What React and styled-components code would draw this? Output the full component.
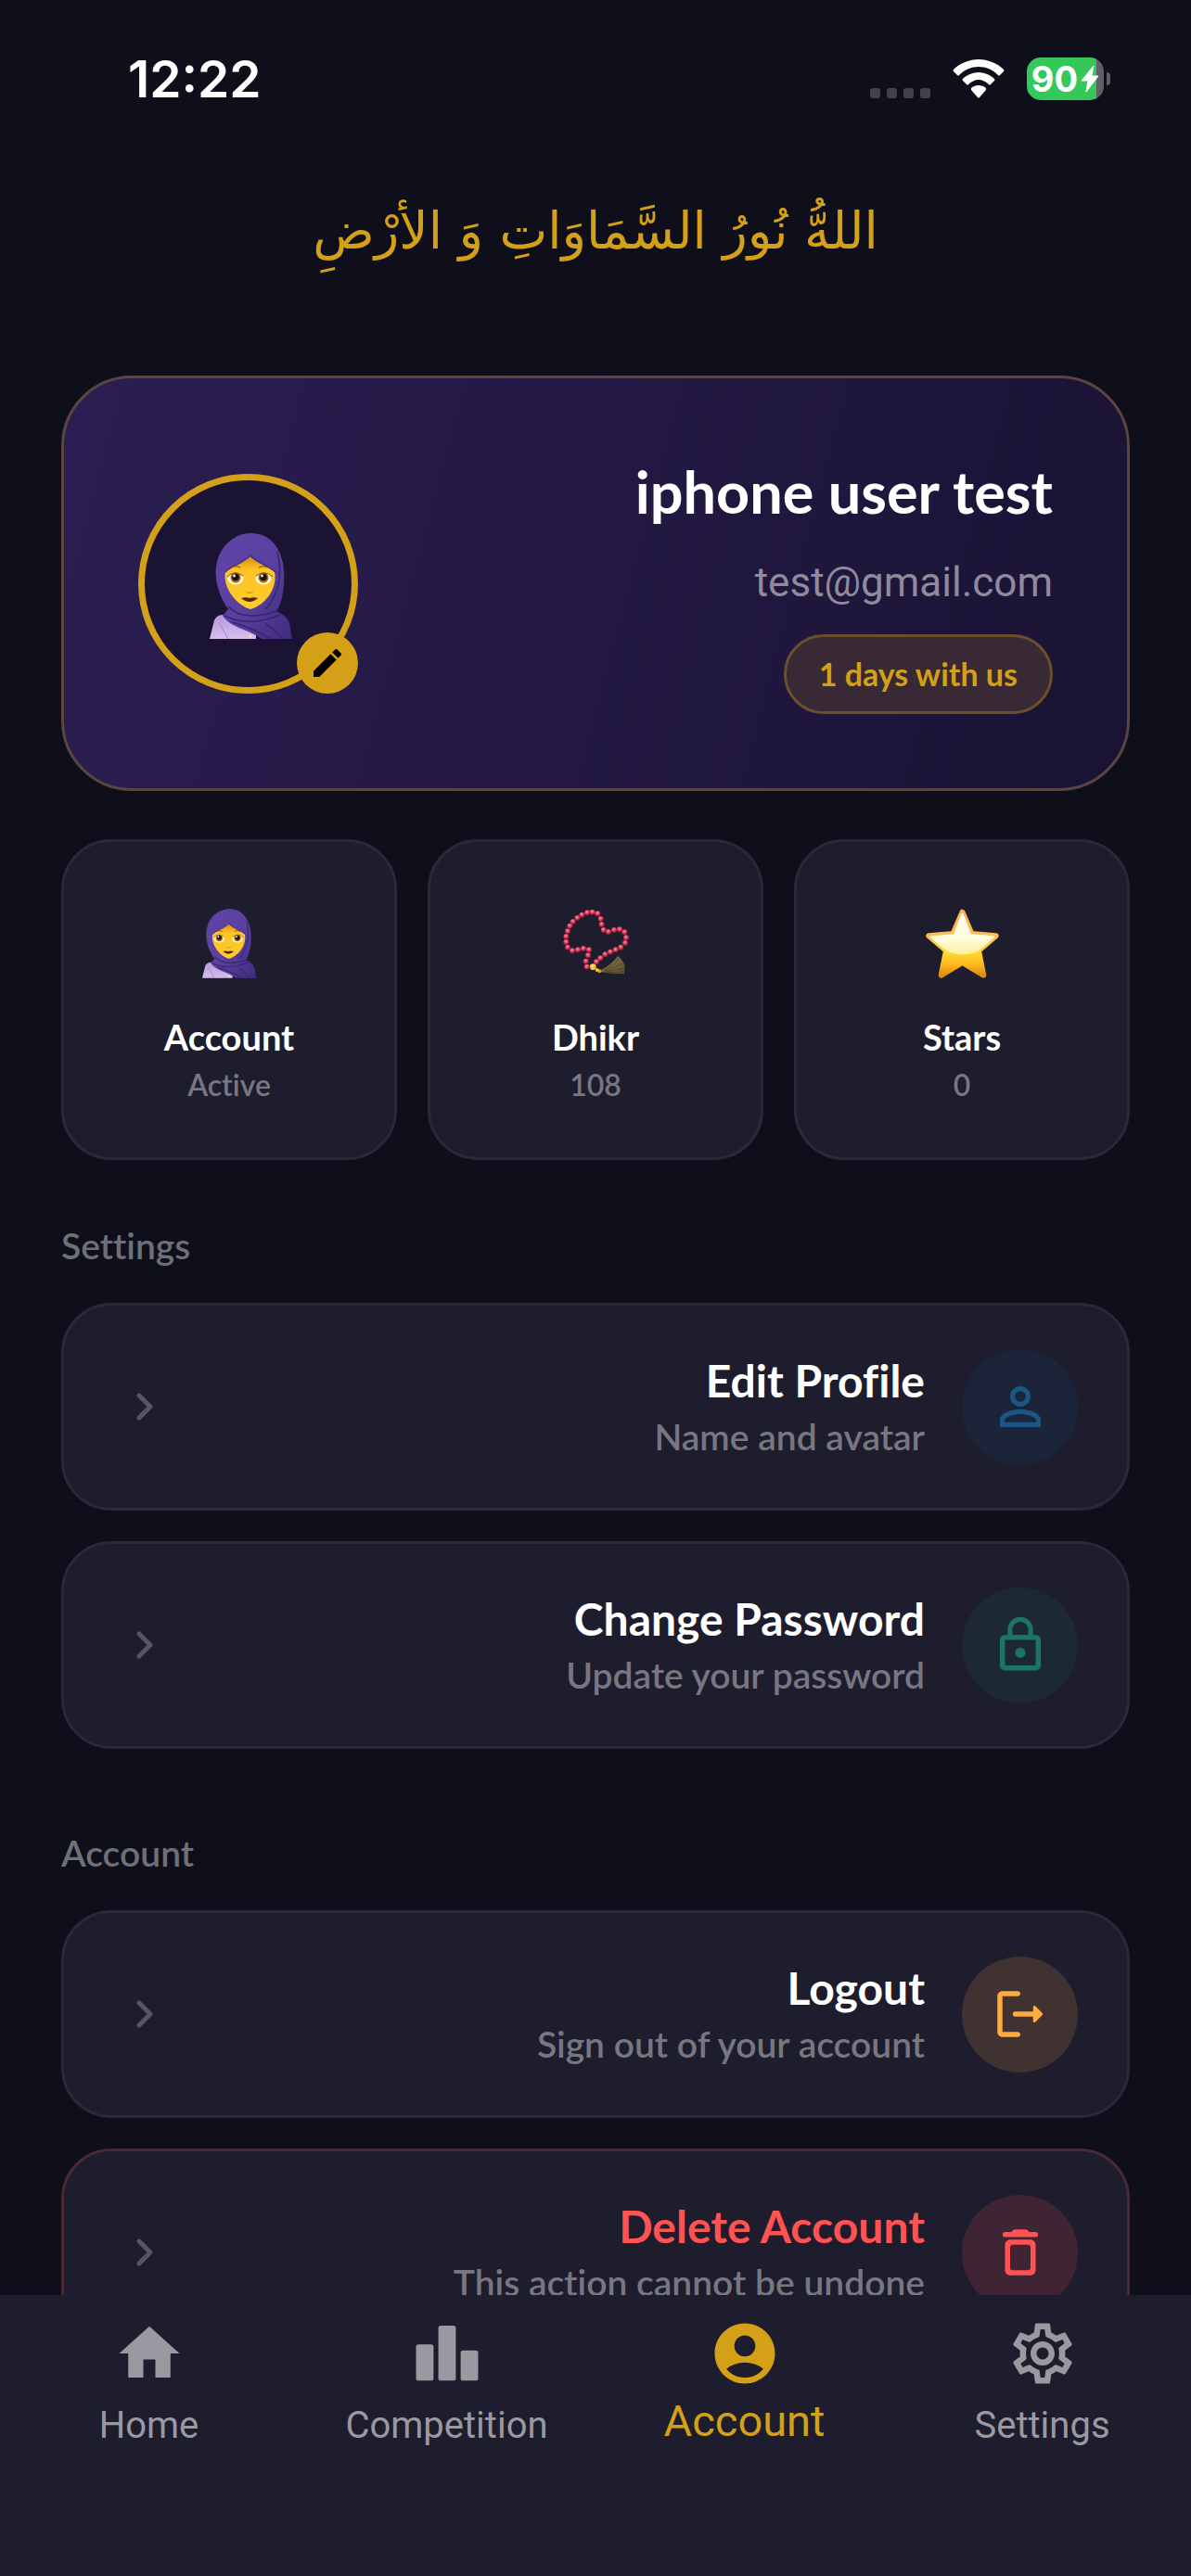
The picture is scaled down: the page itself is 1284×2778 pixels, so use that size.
import React from 'react';
import styled, { createGlobalStyle } from 'styled-components';
import {
    MdAccountCircle,
    MdEdit,
    MdHome,
    MdLockOutline,
    MdOutlineSettings,
    MdPersonOutline,
} from 'react-icons/md';

const WomanIcon = ({ width, height }) => (
    <svg width={width} height={height} viewBox="0 0 90 114" aria-hidden="true">
        <defs>
            <linearGradient id="hood" x1="0" y1="0" x2="1" y2="1">
                <stop offset="0" stopColor="#6045a8" />
                <stop offset="0.5" stopColor="#5a40a0" />
                <stop offset="1" stopColor="#3f2c7c" />
            </linearGradient>
            <linearGradient id="skin" x1="0" y1="0" x2="0" y2="1">
                <stop offset="0" stopColor="#d98a12" />
                <stop offset="0.25" stopColor="#fdc423" />
                <stop offset="1" stopColor="#ffcb2e" />
            </linearGradient>
            <linearGradient id="shirt" x1="0" y1="0" x2="0" y2="1">
                <stop offset="0" stopColor="#b79bd9" />
                <stop offset="1" stopColor="#d6bdee" />
            </linearGradient>
        </defs>
        <path d="M0 114 L5 94 Q7 89 13 88 L50 96 V114 Z" fill="url(#shirt)" />
        <path d="M10 96 L20 114" stroke="#9d83c4" strokeWidth="1" />
        <path
            d="M45 0 C64 0 75 14 79 32 C82 50 80 72 72 84 C80 88 85 92 86 97 L89 114 H56 C44 104 22 102 14 89 L20 82 C10 68 5 50 7 36 C10 14 26 0 45 0 Z"
            fill="url(#hood)"
        />
        <path
            d="M43 25 C52 33 64 36 70 42 C73 57 63 76 44 82 C27 77 14 57 17 42 C22 36 35 33 43 25 Z"
            fill="url(#skin)"
        />
        <path d="M17 42 C22 35 36 33 44 24 C52 33 64 35 71 42" stroke="#4a3489" strokeWidth="1.5" fill="none" />
        <ellipse cx="28" cy="49" rx="8.5" ry="6.5" fill="#fff8e4" />
        <ellipse cx="58" cy="49" rx="8.5" ry="6.5" fill="#fff8e4" />
        <circle cx="28" cy="48" r="5.5" fill="#a56a12" />
        <circle cx="58" cy="48" r="5.5" fill="#a56a12" />
        <circle cx="28" cy="47.5" r="3.8" fill="#1d1108" />
        <circle cx="58" cy="47.5" r="3.8" fill="#1d1108" />
        <circle cx="26.5" cy="46" r="1.4" fill="#fff" />
        <circle cx="56.5" cy="46" r="1.4" fill="#fff" />
        <path d="M19 47 Q27 39 36 46 M50 46 Q59 39 68 47" stroke="#7a4a14" strokeWidth="1" fill="none" />
        <path d="M23 37 Q28 34.5 33 37 M53 37 Q58 34.5 63 37" stroke="#7a460e" strokeWidth="1.2" fill="none" />
        <path d="M39 63 Q43 66 47 63" stroke="#e09a1a" strokeWidth="1.5" fill="none" />
        <path d="M34 70 Q39 68.5 43 70 Q47 68.5 52 70 Q43 78 34 70 Z" fill="#54260a" />
        <path
            d="M20 79 Q36 96 72 84 M16 89 Q42 102 76 88 M24 96 Q46 102 66 114 M60 98 Q72 104 78 114 M73 20 Q82 58 60 82"
            stroke="#382571"
            strokeWidth="1.6"
            fill="none"
        />
        <circle cx="44" cy="111" r="1.6" fill="#f1e1a0" />
    </svg>
);

const beads = [
    [140, 38], [157, 43], [167, 60], [170, 78], [176, 96], [192, 102], [210, 96], [228, 94],
    [244, 103], [249, 121], [246, 138], [232, 152], [215, 160], [198, 167], [181, 175],
    [166, 187], [153, 199], [122, 215], [119, 197], [126, 178], [129, 160], [111, 156],
    [93, 160], [75, 163], [60, 152], [55, 135], [55, 117], [60, 100], [67, 83], [77, 69],
    [91, 57], [106, 47], [123, 40],
];

const BeadsIcon = () => (
    <svg width="72" height="72" viewBox="42 30 216 216" aria-hidden="true">
        <defs>
            <radialGradient id="bead" cx="0.45" cy="0.35" r="0.65">
                <stop offset="0" stopColor="#f596aa" />
                <stop offset="0.5" stopColor="#d8405f" />
                <stop offset="1" stopColor="#8e0f2d" />
            </radialGradient>
            <linearGradient id="tassel" x1="0" y1="0" x2="1" y2="1">
                <stop offset="0" stopColor="#8a7a50" />
                <stop offset="1" stopColor="#5c4d2c" />
            </linearGradient>
        </defs>
        {beads.map(([x, y]) => (
            <circle key={`${x}-${y}`} cx={x} cy={y} r="9" fill="url(#bead)" />
        ))}
        <path d="M168 226 Q204 206 222 180 Q236 188 245 212 L243 238 Q206 238 168 232 Z" fill="url(#tassel)" />
        <path
            d="M176 228 Q210 212 226 186 M180 229 Q216 218 238 202 M180 231 Q216 226 244 218 M180 232 Q214 234 242 230"
            stroke="#463a20"
            strokeWidth="2"
            fill="none"
        />
        <circle cx="163" cy="229" r="6" fill="#e0a019" />
        <circle cx="155" cy="225" r="6" fill="#f5c02c" />
        <circle cx="142" cy="215" r="10" fill="#f7c331" />
        <circle cx="140" cy="212" r="4" fill="#ffee9a" />
    </svg>
);

const StarIcon = () => (
    <svg width="79" height="75" viewBox="0 0 236 222" aria-hidden="true">
        <defs>
            <linearGradient id="star" x1="0" y1="0" x2="0" y2="1">
                <stop offset="0" stopColor="#ffb052" />
                <stop offset="0.35" stopColor="#fbbd55" />
                <stop offset="0.65" stopColor="#fed82f" />
                <stop offset="0.85" stopColor="#fbb31a" />
                <stop offset="1" stopColor="#dd8d14" />
            </linearGradient>
            <linearGradient id="shine" x1="0" y1="0" x2="0" y2="1">
                <stop offset="0" stopColor="#fffdf0" />
                <stop offset="0.6" stopColor="#fffde0" />
                <stop offset="1" stopColor="#fdf0a0" />
            </linearGradient>
        </defs>
        <path
            d="M118 10 L148 80 L226 86 L170 134 L186 213 L118 172 L50 213 L66 134 L10 86 L88 80 Z"
            fill="url(#star)"
            stroke="url(#star)"
            strokeWidth="18"
            strokeLinejoin="round"
        />
        <path
            d="M118 16 L144 84 L218 90 L168 132 Q118 154 68 132 L18 90 L92 84 Z"
            fill="url(#shine)"
            stroke="url(#shine)"
            strokeWidth="7"
            strokeLinejoin="round"
        />
    </svg>
);

const LogoutIcon = () => (
    <svg viewBox="0 0 24 24" width="1em" height="1em" fill="currentColor" aria-hidden="true">
        <path d="M5 5h6c.55 0 1-.45 1-1s-.45-1-1-1H5c-1.1 0-2 .9-2 2v14c0 1.1.9 2 2 2h6c.55 0 1-.45 1-1s-.45-1-1-1H5V5z" />
        <path d="M20.65 11.65l-2.79-2.79c-.32-.32-.86-.1-.86.35V11h-7c-.55 0-1 .45-1 1s.45 1 1 1h7v1.79c0 .45.54.67.85.35l2.79-2.79c.2-.19.2-.51.01-.7z" />
    </svg>
);

const TrashIcon = () => (
    <svg viewBox="0 0 24 24" width="1em" height="1em" fill="currentColor" aria-hidden="true">
        <path
            fillRule="evenodd"
            d="M6 19c0 1.1.9 2 2 2h8c1.1 0 2-.9 2-2V9c0-1.1-.9-2-2-2H8c-1.1 0-2 .9-2 2v10zM9 9h6c.55 0 1 .45 1 1v8c0 .55-.45 1-1 1H9c-.55 0-1-.45-1-1v-8c0-.55.45-1 1-1z"
        />
        <path d="M15.5 4l-.71-.71c-.18-.18-.44-.29-.7-.29H9.91c-.26 0-.52.11-.7.29L8.5 4H6c-.55 0-1 .45-1 1s.45 1 1 1h12c.55 0 1-.45 1-1s-.45-1-1-1h-2.5z" />
    </svg>
);

const ChartIcon = () => (
    <svg viewBox="0 0 24 24" width="1em" height="1em" fill="currentColor" aria-hidden="true">
        <rect x="1.7" y="9" width="5.8" height="12" rx="0.8" />
        <rect x="9.1" y="2.8" width="5.8" height="18.2" rx="0.8" />
        <rect x="16.5" y="11" width="5.8" height="10" rx="0.8" />
    </svg>
);

const ChevronIcon = () => (
    <svg width="24" height="36" viewBox="0 0 24 36" fill="none" aria-hidden="true">
        <path d="M5 6 L17 18 L5 30" stroke="#565562" strokeWidth="5" strokeLinecap="round" strokeLinejoin="round" />
    </svg>
);

const WifiIcon = () => (
    <svg width="56" height="42" viewBox="0 0 56 42" fill="#fff" aria-hidden="true">
        <path d="M28 0 C38 0 48 4 55 11 Q56 12 55 13 L51 17 Q50 18 49 17 C43 11 36 8 28 8 C20 8 13 11 7 17 Q6 18 5 17 L1 13 Q0 12 1 11 C8 4 18 0 28 0 Z" />
        <path d="M28 14 C34 14 41 17 45 21 Q46 22 45 23 L41 27 Q40 28 39 27 C36 24 32 22 28 22 C24 22 20 24 17 27 Q16 28 15 27 L11 23 Q10 22 11 21 C15 17 22 14 28 14 Z" />
        <path d="M28 28 C31 28 34 29 36 31 Q36 32 36 33 L29 41 Q28 42 27 41 L20 33 Q20 32 20 31 C22 29 25 28 28 28 Z" />
    </svg>
);

const BoltIcon = () => (
    <svg width="20" height="30" viewBox="0 0 20 30" aria-hidden="true">
        <path d="M14 1 L1 17 H8 L6 29 L19 12 H12 Z" fill="#fff" stroke="#fff" strokeWidth="1" strokeLinejoin="round" />
    </svg>
);

const stats = [
    { title: 'Account', value: 'Active', icon: <WomanIcon width={59} height={75} /> },
    { title: 'Dhikr', value: '108', icon: <BeadsIcon /> },
    { title: 'Stars', value: '0', icon: <StarIcon /> },
];

const sections = [
    {
        label: 'Settings',
        rows: [
            { title: 'Edit Profile', text: 'Name and avatar', icon: <MdPersonOutline />, color: '#1c5684', tint: '#1b2438' },
            { title: 'Change Password', text: 'Update your password', icon: <MdLockOutline />, color: '#1b7560', tint: '#1c2833' },
        ],
    },
    {
        label: 'Account',
        rows: [
            { title: 'Logout', text: 'Sign out of your account', icon: <LogoutIcon />, color: '#ffab40', tint: '#3f3230' },
            { title: 'Delete Account', text: 'This action cannot be undone', icon: <TrashIcon />, color: '#ff5252', tint: '#3f2433', danger: true },
        ],
    },
];

const tabs = [
    { name: 'Home', icon: <MdHome /> },
    { name: 'Competition', icon: <ChartIcon /> },
    { name: 'Account', icon: <MdAccountCircle />, active: true },
    { name: 'Settings', icon: <MdOutlineSettings /> },
];

const App = () => {
    return (
        <Screen>
            <GlobalStyle />
            <StatusBar>
                <Clock>12:22</Clock>
                <StatusIcons>
                    <Signal>
                        <i />
                        <i />
                        <i />
                        <i />
                    </Signal>
                    <WifiIcon />
                    <BatteryGroup>
                        <Battery>
                            90
                            <BoltIcon />
                        </Battery>
                        <BatteryTip />
                    </BatteryGroup>
                </StatusIcons>
            </StatusBar>

            <Verse lang="ar" dir="rtl">اللهُّ نُورُ السَّمَاوَاتِ وَ الأرْضِ</Verse>

            <Content>
                <ProfileCard>
                    <Avatar>
                        <WomanIcon width={90} height={114} />
                        <EditButton type="button" aria-label="Edit avatar">
                            <MdEdit />
                        </EditButton>
                    </Avatar>
                    <ProfileInfo>
                        <UserName>iphone user test</UserName>
                        <Email>test@gmail.com</Email>
                        <DaysPill>1 days with us</DaysPill>
                    </ProfileInfo>
                </ProfileCard>

                <Stats>
                    {stats.map((stat) => (
                        <StatCard key={stat.title}>
                            <StatIcon>{stat.icon}</StatIcon>
                            <StatTitle>{stat.title}</StatTitle>
                            <StatValue>{stat.value}</StatValue>
                        </StatCard>
                    ))}
                </Stats>

                {sections.map((section) => (
                    <Section key={section.label}>
                        <SectionLabel>{section.label}</SectionLabel>
                        {section.rows.map((row) => (
                            <Row key={row.title} type="button" $danger={row.danger}>
                                <ChevronIcon />
                                <RowText>
                                    <RowTitle $danger={row.danger}>{row.title}</RowTitle>
                                    <RowSub>{row.text}</RowSub>
                                </RowText>
                                <RowIcon $color={row.color} $tint={row.tint}>{row.icon}</RowIcon>
                            </Row>
                        ))}
                    </Section>
                ))}
            </Content>

            <TabBar>
                {tabs.map((tab) => (
                    <Tab key={tab.name} href={`#${tab.name.toLowerCase()}`} $active={tab.active}>
                        {tab.icon}
                        <TabLabel $active={tab.active}>{tab.name}</TabLabel>
                    </Tab>
                ))}
            </TabBar>
        </Screen>
    );
};

const GlobalStyle = createGlobalStyle`
    * {
        box-sizing: border-box;
    }

    body {
        margin: 0;
        background: #0f0f1b;
    }

    svg {
        display: block;
        flex-shrink: 0;
    }
`;

const Screen = styled.div`
    display: flex;
    flex-direction: column;
    height: 100vh;
    background: #0f0f1b;
    color: #fff;
    font-family: Lato, 'Open Sans', sans-serif;
    font-variant-ligatures: no-common-ligatures;
`;

const StatusBar = styled.header`
    display: flex;
    justify-content: space-between;
    align-items: center;
    flex-shrink: 0;
    height: 108px;
    margin-top: 31px;
    padding: 0 87px 0 138px;
`;

const Clock = styled.time`
    font-family: Inter, sans-serif;
    font-size: 55px;
    font-weight: 600;
    line-height: 64px;
`;

const StatusIcons = styled.div`
    display: flex;
    align-items: center;
    gap: 24px;
`;

const Signal = styled.div`
    display: flex;
    align-self: flex-end;
    gap: 7px;
    padding-bottom: 2px;

    i {
        width: 11px;
        height: 11px;
        border-radius: 3px;
        background: #42414c;
    }
`;

const BatteryGroup = styled.div`
    display: flex;
    align-items: center;
    gap: 3px;
`;

const Battery = styled.div`
    display: flex;
    align-items: center;
    justify-content: center;
    gap: 3px;
    width: 83px;
    height: 46px;
    border-radius: 15px;
    background: linear-gradient(to right, #34c759 90%, #5f5e68 90%);
    font-family: Inter, sans-serif;
    font-size: 38px;
    font-weight: 700;
    line-height: 46px;
`;

const BatteryTip = styled.span`
    width: 4px;
    height: 14px;
    border-radius: 0 4px 4px 0;
    background: #5f5e68;
`;

const Verse = styled.h1`
    flex-shrink: 0;
    margin: 0;
    height: 266px;
    padding-top: 60px;
    color: #d4a017;
    font-family: 'DejaVu Sans', sans-serif;
    font-size: 55px;
    font-weight: 400;
    font-variant-ligatures: normal;
    line-height: 100px;
    text-align: center;
`;

const Content = styled.main`
    flex: 1;
    min-height: 0;
    padding: 0 66px;
    overflow-y: auto;
    scrollbar-width: none;
`;

const ProfileCard = styled.section`
    display: flex;
    justify-content: space-between;
    align-items: center;
    height: 448px;
    padding: 0 80px;
    border: 3px solid #5b4540;
    border-radius: 76px;
    background: linear-gradient(105deg, #2b1e52, #1a1333);
`;

const Avatar = styled.div`
    position: relative;
    display: flex;
    justify-content: center;
    align-items: center;
    width: 237px;
    height: 237px;
    padding-left: 6px;
    padding-top: 6px;
    border: 7px solid #d4a017;
    border-radius: 50%;
    background: #1b1333;
`;

const EditButton = styled.button`
    position: absolute;
    right: -7px;
    bottom: -7px;
    display: flex;
    justify-content: center;
    align-items: center;
    width: 66px;
    height: 66px;
    padding: 0;
    border: none;
    border-radius: 50%;
    background: #d4a017;
    color: #000;
    font-size: 40px;
`;

const ProfileInfo = styled.div`
    display: flex;
    flex-direction: column;
    align-items: flex-end;
`;

const UserName = styled.h2`
    margin: 0;
    font-size: 63px;
    font-weight: 700;
    line-height: 84px;
`;

const Email = styled.p`
    margin: 28px 0;
    color: #8f8a9c;
    font-family: Roboto, sans-serif;
    font-size: 44px;
    line-height: 56px;
`;

const DaysPill = styled.span`
    padding: 0 35px;
    border: 3px solid #6a4f2a;
    border-radius: 43px;
    background: #382934;
    color: #d4a017;
    font-size: 34px;
    font-weight: 700;
    line-height: 80px;
`;

const Stats = styled.div`
    display: grid;
    grid-template-columns: repeat(3, 1fr);
    gap: 33px;
    margin-top: 52px;
`;

const StatCard = styled.article`
    display: flex;
    flex-direction: column;
    align-items: center;
    height: 346px;
    padding-top: 70px;
    border: 3px solid #2a2938;
    border-radius: 54px;
    background: #1e1d2d;
`;

const StatIcon = styled.div`
    display: flex;
    align-items: center;
    height: 78px;
    margin-bottom: 38px;
`;

const StatTitle = styled.h3`
    margin: 0;
    font-size: 38px;
    font-weight: 700;
    line-height: 48px;
`;

const StatValue = styled.p`
    margin: 8px 0 0;
    color: #787781;
    font-size: 32px;
    font-weight: 600;
    line-height: 40px;
`;

const Section = styled.section`
    display: flex;
    flex-direction: column;
    gap: 33px;
    margin-top: 67px;

    & + & {
        margin-top: 87px;
    }
`;

const SectionLabel = styled.h2`
    margin: 0 0 4px;
    color: #6f6f77;
    font-size: 39px;
    font-weight: 600;
    line-height: 50px;
`;

const Row = styled.button`
    display: flex;
    align-items: center;
    gap: 40px;
    height: 224px;
    flex-shrink: 0;
    padding: 0 53px 0 76px;
    border: 3px solid ${({ $danger }) => ($danger ? '#4c2836' : '#2a2938')};
    border-radius: 54px;
    background: #1e1d2d;
    color: #fff;
    font-family: inherit;
    font-variant-ligatures: inherit;
`;

const RowText = styled.span`
    display: flex;
    flex: 1;
    flex-direction: column;
    padding-top: 4px;
    text-align: right;
`;

const RowTitle = styled.span`
    color: ${({ $danger }) => ($danger ? '#ff5252' : '#fff')};
    font-size: 48px;
    font-weight: 700;
    line-height: 60px;
`;

const RowSub = styled.span`
    color: #787781;
    font-size: 39px;
    font-weight: 600;
    line-height: 60px;
`;

const RowIcon = styled.span`
    display: flex;
    justify-content: center;
    align-items: center;
    width: 125px;
    height: 125px;
    border-radius: 50%;
    background: ${({ $tint }) => $tint};
    color: ${({ $color }) => $color};
    font-size: 66px;
`;

const TabBar = styled.nav`
    display: flex;
    flex-shrink: 0;
    height: 303px;
    padding-top: 24px;
    background: #1e1d2d;
`;

const Tab = styled.a`
    display: flex;
    flex: 1;
    flex-direction: column;
    align-items: center;
    gap: 8px;
    color: ${({ $active }) => ($active ? '#d4a017' : '#9a99a2')};
    font-family: Roboto, sans-serif;
    font-size: 78px;
    text-decoration: none;
`;

const TabLabel = styled.span`
    font-size: ${({ $active }) => ($active ? '47px' : '40px')};
    line-height: ${({ $active }) => ($active ? '52px' : '62px')};
`;

export default App;
